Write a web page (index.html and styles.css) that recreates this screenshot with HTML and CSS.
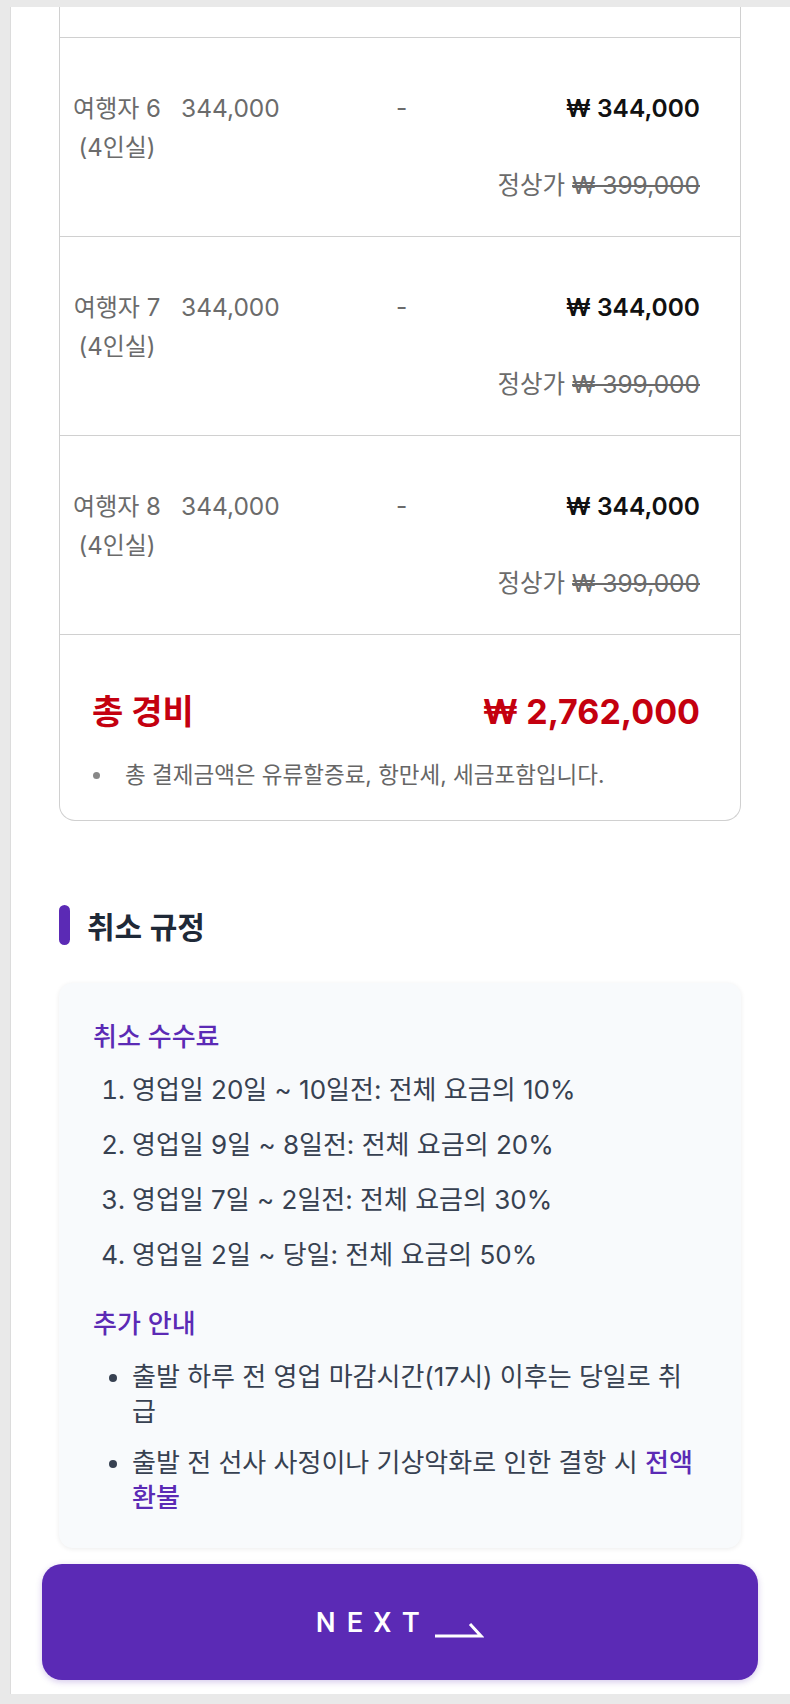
FILE: index.html
```html
<!DOCTYPE html>
<html lang="ko">
<head>
  <meta charset="UTF-8" />
  <meta name="viewport" content="width=device-width, initial-scale=1.0"/>
  <title>요금 확인</title>
  <link rel="stylesheet" href="styles.css">
</head>
<body>
  <div class="page">
    <div class="content">

      <div class="fare-card">
        <div class="row-cut"></div>

        <div class="row">
          <div class="name">여행자 6<br>(4인실)</div>
          <div class="price">344,000</div>
          <div class="discount">-</div>
          <div class="amount">
            <div class="now">₩ 344,000</div>
            <div class="was">정상가 <s>₩ 399,000</s></div>
          </div>
        </div>

        <div class="row">
          <div class="name">여행자 7<br>(4인실)</div>
          <div class="price">344,000</div>
          <div class="discount">-</div>
          <div class="amount">
            <div class="now">₩ 344,000</div>
            <div class="was">정상가 <s>₩ 399,000</s></div>
          </div>
        </div>

        <div class="row">
          <div class="name">여행자 8<br>(4인실)</div>
          <div class="price">344,000</div>
          <div class="discount">-</div>
          <div class="amount">
            <div class="now">₩ 344,000</div>
            <div class="was">정상가 <s>₩ 399,000</s></div>
          </div>
        </div>

        <div class="sum">
          <div class="sum-line">
            <span class="sum-label">총 경비</span>
            <span class="sum-amount">₩ 2,762,000</span>
          </div>
          <p class="sum-note">총 결제금액은 유류할증료, 항만세, 세금포함입니다.</p>
        </div>
      </div>

      <h2 class="section-title">취소 규정</h2>

      <div class="policy">
        <h3>취소 수수료</h3>
        <ol>
          <li>영업일 20일 ~ 10일전: 전체 요금의 10%</li>
          <li>영업일 9일 ~ 8일전: 전체 요금의 20%</li>
          <li>영업일 7일 ~ 2일전: 전체 요금의 30%</li>
          <li>영업일 2일 ~ 당일: 전체 요금의 50%</li>
        </ol>

        <h3 class="extra">추가 안내</h3>
        <ul>
          <li>출발 하루 전 영업 마감시간(17시) 이후는 당일로 취급</li>
          <li>출발 전 선사 사정이나 기상악화로 인한 결항 시 <span class="hl">전액 환불</span></li>
        </ul>
      </div>

    </div>

    <div class="footer">
      <button class="next-btn">
        <span class="next-label">NEXT</span>
        <svg class="next-arrow" width="50" height="16" viewBox="0 0 50 16">
          <polyline points="1,14 47,14 36,2" fill="none" stroke="#fff" stroke-width="3"/>
        </svg>
      </button>
    </div>
  </div>
</body>
</html>
```

FILE: styles.css
```css
* {
  box-sizing: border-box;
}
body {
  margin: 0;
  padding: 7px 0 8px 10px;
  background: #e9e9e9;
  font-family: Inter, "Noto Sans CJK KR", sans-serif;
}
.page {
  background: #fff;
  border-left: 1px solid #dcdcdc;
}
.content {
  padding: 0 49px 0 48px;
}

/* fare table */
.fare-card {
  border: 1px solid #d0d0d0;
  border-top: none;
  border-radius: 0 0 16px 16px;
}
.row-cut {
  height: 30px;
}
.row {
  display: grid;
  grid-template-columns: 90px 196px 1fr auto;
  column-gap: 19px;
  padding: 51px 40px 31px 12px;
  border-top: 1px solid #d0d0d0;
  font-size: 24.5px;
  line-height: 39px;
  color: #6b6b6b;
}
.row .name {
  font-size: 24px;
  text-align: center;
  white-space: nowrap;
}
.row .amount {
  text-align: right;
}
.now {
  color: #111;
  font-weight: 600;
}
.was {
  margin-top: 38px;
}
.was s {
  text-decoration: line-through;
}

.sum {
  border-top: 1px solid #d0d0d0;
  padding: 57px 40px 30px 32px;
}
.sum-line {
  display: flex;
  justify-content: space-between;
  align-items: center;
  line-height: 40px;
  color: #c4000f;
  font-weight: 700;
}
.sum-label {
  font-size: 34px;
}
.sum-amount {
  font-size: 34px;
}
.sum-note {
  position: relative;
  margin: 28px 0 0;
  padding-left: 33px;
  font-size: 22.5px;
  line-height: 30px;
  color: #666;
}
.sum-note::before {
  content: "";
  position: absolute;
  left: 1px;
  top: 12px;
  width: 7px;
  height: 7px;
  border-radius: 50%;
  background: #888;
}

/* cancel policy */
.section-title {
  display: flex;
  align-items: center;
  gap: 17px;
  height: 40px;
  margin: 84px 0 38px;
  font-size: 30px;
  font-weight: 600;
  color: #1f2937;
}
.section-title::before {
  content: "";
  width: 11px;
  height: 40px;
  border-radius: 6px;
  background: #5b2ab5;
}
.policy {
  padding: 36px 43px 33px 34px;
  background: #f8fafc;
  border-radius: 14px;
  box-shadow: 0 1px 5px rgba(0, 0, 0, 0.08);
  color: #374151;
  font-size: 26px;
}
.policy h3 {
  margin: 0 0 17px;
  font-size: 26px;
  font-weight: 500;
  line-height: 36px;
  color: #5b2ab5;
}
.policy h3.extra {
  margin-top: 34px;
}
.policy ol,
.policy ul {
  margin: 0;
  padding-left: 39px;
}
.policy ol li {
  line-height: 35px;
  margin-bottom: 20px;
}
.policy ul {
  margin-top: 5px;
}
.policy ul li {
  line-height: 35px;
  margin-bottom: 16px;
}
.policy li:last-child {
  margin-bottom: 0;
}
.hl {
  color: #5b2ab5;
  font-weight: 500;
}

/* bottom button */
.footer {
  padding: 16px 32px 14px 31px;
}
.next-btn {
  display: flex;
  align-items: center;
  justify-content: center;
  width: 100%;
  height: 116px;
  border: none;
  border-radius: 20px;
  background: #5b2ab5;
  box-shadow: 0 2px 6px rgba(91, 42, 181, 0.25);
  color: #fff;
  cursor: pointer;
}
.next-label {
  font-family: Roboto, sans-serif;
  font-size: 28px;
  font-weight: 500;
  letter-spacing: 11px;
}
.next-arrow {
  margin: 16px 0 0 4px;
}
```
